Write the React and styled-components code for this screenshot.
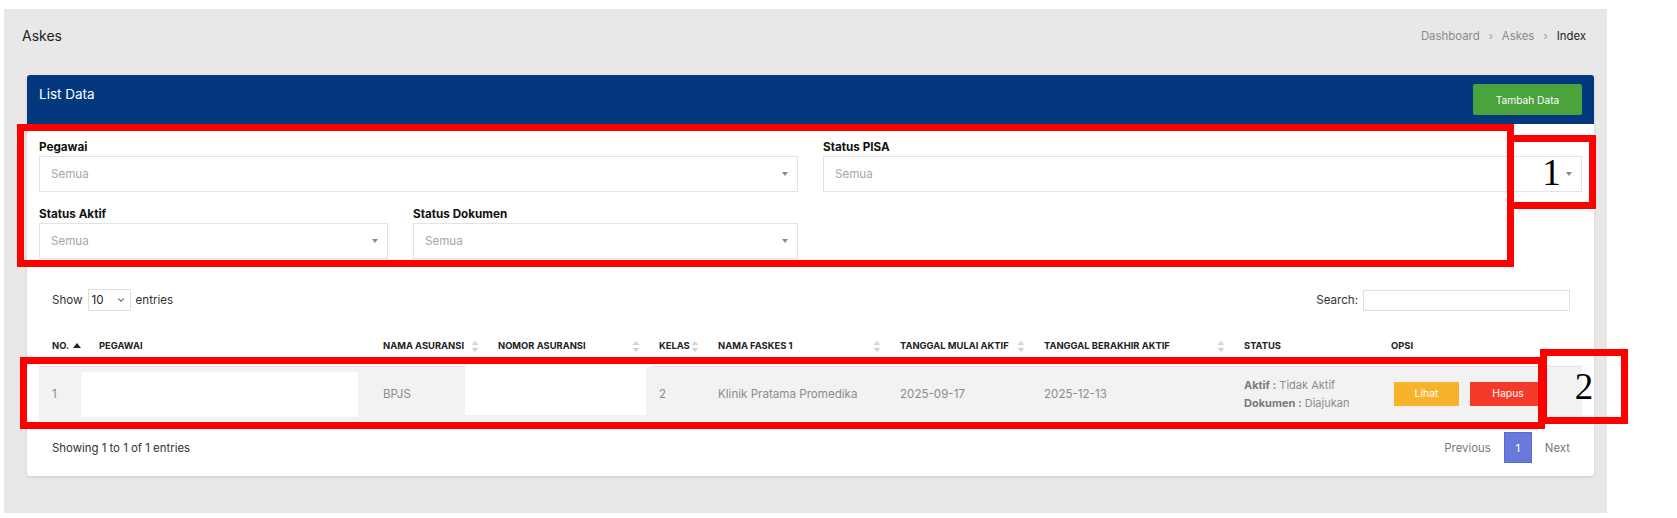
import styled, { createGlobalStyle } from 'styled-components';
import { ChevronDown } from 'lucide-react';

const Global = createGlobalStyle`
  html, body { margin: 0; padding: 0; background: #fff; }
  body { font-family: Inter, "Noto Sans", sans-serif; color: #333; }
  * { box-sizing: border-box; }
`;

const Page = styled.div`
  position: relative;
  width: 1677px;
  height: 518px;
  padding: 9px 70px 5px 4px;
`;

const Panel = styled.div`
  background: #e8e8e8;
  height: 504px;
  padding: 0 13px 0 23px;
`;

const TopBar = styled.div`
  display: flex;
  justify-content: space-between;
  align-items: center;
  height: 52px;
  padding-top: 1px;
  padding-right: 8px;
  margin-left: -5px;
`;

const PageTitle = styled.h1`
  margin: 0;
  font-size: 14px;
  font-weight: 400;
  color: #222;
`;

const Crumbs = styled.div`
  display: flex;
  align-items: center;
  gap: 9px;
  font-size: 11.4px;
  color: #8a8a8a;
`;

const Crumb = styled.span`
  color: ${p => (p.$active ? '#1f1f1f' : '#8a8a8a')};
`;

const Sep = styled.span`
  font-size: 11px;
  color: #999;
`;

const Card = styled.div`
  margin-top: 14px;
  background: #fff;
  border-radius: 3px;
  box-shadow: 0 1px 3px rgba(0, 0, 0, 0.12);
  overflow: hidden;
`;

const CardHead = styled.div`
  background: #03387f;
  display: flex;
  justify-content: space-between;
  align-items: flex-start;
  padding: 9px 12px;
  height: 49px;
`;

const CardTitle = styled.div`
  color: #fff;
  font-size: 13.5px;
  line-height: 20px;
`;

const GreenButton = styled.button`
  background: #4aa33d;
  color: #fff;
  border: none;
  border-radius: 2px;
  width: 109px;
  height: 31px;
  font-family: inherit;
  font-size: 10.2px;
`;

const CardBody = styled.div`
  padding: 15px 12px 13px;
`;

const FilterRow = styled.div`
  display: grid;
  grid-template-columns: ${p => p.$cols};
  gap: 25px;
  margin-bottom: ${p => p.$mb || 0}px;
`;

const Field = styled.div`
  display: flex;
  flex-direction: column;
`;

const Label = styled.label`
  font-size: 11.7px;
  font-weight: 700;
  color: #111;
  line-height: 16px;
  margin-bottom: 1px;
`;

const FakeSelect = styled.div`
  height: 36px;
  border: 1px solid #e3e3e3;
  display: flex;
  align-items: center;
  justify-content: space-between;
  padding: 0 9px 0 11px;
  font-size: 11.6px;
  color: #a6a6a6;
`;

const Caret = styled.span`
  width: 0;
  height: 0;
  border-left: 3px solid transparent;
  border-right: 3px solid transparent;
  border-top: 4px solid #888;
`;

const Toolbar = styled.div`
  display: flex;
  justify-content: space-between;
  align-items: center;
  margin-top: 30px;
  padding: 0 12px 0 13px;
  font-size: 11.6px;
  color: #333;
`;

const Inline = styled.div`
  display: flex;
  align-items: center;
  gap: 5px;
`;

const LengthSelect = styled.div`
  width: 43px;
  height: 22px;
  border: 1px solid #e0e0e0;
  display: flex;
  align-items: center;
  justify-content: space-between;
  padding: 0 4px 0 3px;
  font-size: 11.6px;
  color: #222;
`;

const SearchInput = styled.div`
  width: 207px;
  height: 21px;
  border: 1px solid #e0e0e0;
`;

const Table = styled.table`
  width: 1543px;
  border-collapse: collapse;
  margin-top: 15px;
  table-layout: fixed;
`;

const Th = styled.th`
  position: relative;
  text-align: left;
  font-size: 9.4px;
  font-weight: 700;
  color: #222;
  height: 40px;
  padding: 0 13px;
  border-bottom: 1px solid #e2e2e2;
  white-space: nowrap;
`;

const SortIcon = styled.svg`
  position: absolute;
  right: 6px;
  top: 50%;
  margin-top: -5px;
`;

const Td = styled.td`
  position: relative;
  background: #f2f2f2;
  font-size: 11.6px;
  color: #8c8c8c;
  padding: 0 13px;
  height: 55px;
  vertical-align: middle;
`;

const Redact = styled.div`
  position: absolute;
  background: #fff;
  left: ${p => p.$l}px;
  right: ${p => p.$r}px;
  top: ${p => p.$t}px;
  bottom: ${p => p.$b}px;
`;

const StatusLine = styled.div`
  line-height: 18px;
  font-size: 11px;
  white-space: nowrap;
`;

const Strong = styled.b`
  color: #7a7a7a;
  font-weight: 700;
`;

const Actions = styled.div`
  display: flex;
  gap: 11px;
  padding-left: 3px;
`;

const ActionButton = styled.button`
  background: ${p => p.$bg};
  color: #fff;
  border: none;
  height: 24px;
  width: ${p => p.$w}px;
  font-family: inherit;
  font-size: 10.4px;
`;

const Footer = styled.div`
  display: flex;
  justify-content: space-between;
  align-items: center;
  margin-top: 11px;
  padding: 0 12px 0 13px;
  font-size: 11.4px;
  color: #333;
`;

const Pager = styled.div`
  display: flex;
  align-items: center;
  gap: 13px;
  color: #777;
`;

const PageBtn = styled.div`
  width: 28px;
  height: 31px;
  background: #6979db;
  color: #fff;
  display: flex;
  align-items: center;
  justify-content: center;
  font-size: 11px;
  border: 1px solid #5a6bd0;
`;

const Mark = styled.div`
  position: absolute;
  left: ${p => p.$x}px;
  top: ${p => p.$y}px;
  width: ${p => p.$w}px;
  height: ${p => p.$h}px;
  border: 7px solid #ff0000;
  display: flex;
  align-items: center;
  justify-content: center;
  font-family: "Liberation Serif", serif;
  font-size: 37px;
  color: #000;
  pointer-events: none;
`;

const SortBoth = () => (
  <SortIcon width="8" height="11" viewBox="0 0 8 11">
    <path d="M4 0 L7.5 4 H0.5 Z" fill="#d3d3d3" />
    <path d="M4 11 L7.5 7 H0.5 Z" fill="#d3d3d3" />
  </SortIcon>
);

const SortUp = styled.svg`
  margin-left: 4px;
  vertical-align: 1px;
`;

const columns = [
  { label: 'NO.', w: 47, up: true },
  { label: 'PEGAWAI', w: 284 },
  { label: 'NAMA ASURANSI', w: 115, sort: true },
  { label: 'NOMOR ASURANSI', w: 161, sort: true },
  { label: 'KELAS', w: 59, sort: true },
  { label: 'NAMA FASKES 1', w: 182, sort: true },
  { label: 'TANGGAL MULAI AKTIF', w: 144, sort: true },
  { label: 'TANGGAL BERAKHIR AKTIF', w: 200, sort: true },
  { label: 'STATUS', w: 147 },
  { label: 'OPSI', w: 204 },
];

export default function App() {
  return (
    <Page>
      <Global />
      <Panel>
        <TopBar>
          <PageTitle>Askes</PageTitle>
          <Crumbs>
            <Crumb>Dashboard</Crumb>
            <Sep>›</Sep>
            <Crumb>Askes</Crumb>
            <Sep>›</Sep>
            <Crumb $active>Index</Crumb>
          </Crumbs>
        </TopBar>

        <Card>
          <CardHead>
            <CardTitle>List Data</CardTitle>
            <GreenButton>Tambah Data</GreenButton>
          </CardHead>

          <CardBody>
            <FilterRow $cols="1fr 1fr" $mb={14}>
              <Field>
                <Label>Pegawai</Label>
                <FakeSelect>Semua<Caret /></FakeSelect>
              </Field>
              <Field>
                <Label>Status PISA</Label>
                <FakeSelect>Semua<Caret /></FakeSelect>
              </Field>
            </FilterRow>
            <FilterRow $cols="349px 385px">
              <Field>
                <Label>Status Aktif</Label>
                <FakeSelect>Semua<Caret /></FakeSelect>
              </Field>
              <Field>
                <Label>Status Dokumen</Label>
                <FakeSelect>Semua<Caret /></FakeSelect>
              </Field>
            </FilterRow>

            <Toolbar>
              <Inline>
                Show
                <LengthSelect>10<ChevronDown size={10} strokeWidth={2.5} color="#444" /></LengthSelect>
                entries
              </Inline>
              <Inline>
                Search:
                <SearchInput />
              </Inline>
            </Toolbar>

            <Table>
              <colgroup>
                {columns.map(c => <col key={c.label} style={{ width: c.w }} />)}
              </colgroup>
              <thead>
                <tr>
                  {columns.map(c => (
                    <Th key={c.label}>
                      {c.label}
                      {c.up && (
                        <SortUp width="8" height="5" viewBox="0 0 8 5">
                          <path d="M4 0 L8 5 H0 Z" fill="#222" />
                        </SortUp>
                      )}
                      {c.sort && <SortBoth />}
                    </Th>
                  ))}
                </tr>
              </thead>
              <tbody>
                <tr>
                  <Td>1</Td>
                  <Td><Redact $l={-5} $r={12} $t={5} $b={4} /></Td>
                  <Td>BPJS</Td>
                  <Td><Redact $l={-20} $r={-5} $t={-4} $b={6} /></Td>
                  <Td>2</Td>
                  <Td>Klinik Pratama Promedika</Td>
                  <Td>2025-09-17</Td>
                  <Td>2025-12-13</Td>
                  <Td>
                    <StatusLine><Strong>Aktif :</Strong> Tidak Aktif</StatusLine>
                    <StatusLine><Strong>Dokumen :</Strong> Diajukan</StatusLine>
                  </Td>
                  <Td>
                    <Actions>
                      <ActionButton $bg="#f8b32d" $w={65}>Lihat</ActionButton>
                      <ActionButton $bg="#f43b29" $w={76}>Hapus</ActionButton>
                    </Actions>
                  </Td>
                </tr>
              </tbody>
            </Table>

            <Footer>
              <span>Showing 1 to 1 of 1 entries</span>
              <Pager>
                <span>Previous</span>
                <PageBtn>1</PageBtn>
                <span>Next</span>
              </Pager>
            </Footer>
          </CardBody>
        </Card>
      </Panel>

      <Mark $x={17} $y={124} $w={1497} $h={143} />
      <Mark $x={1507} $y={135} $w={89} $h={74}>1</Mark>
      <Mark $x={20} $y={357} $w={1525} $h={72} />
      <Mark $x={1540} $y={349} $w={88} $h={75}>2</Mark>
    </Page>
  );
}
